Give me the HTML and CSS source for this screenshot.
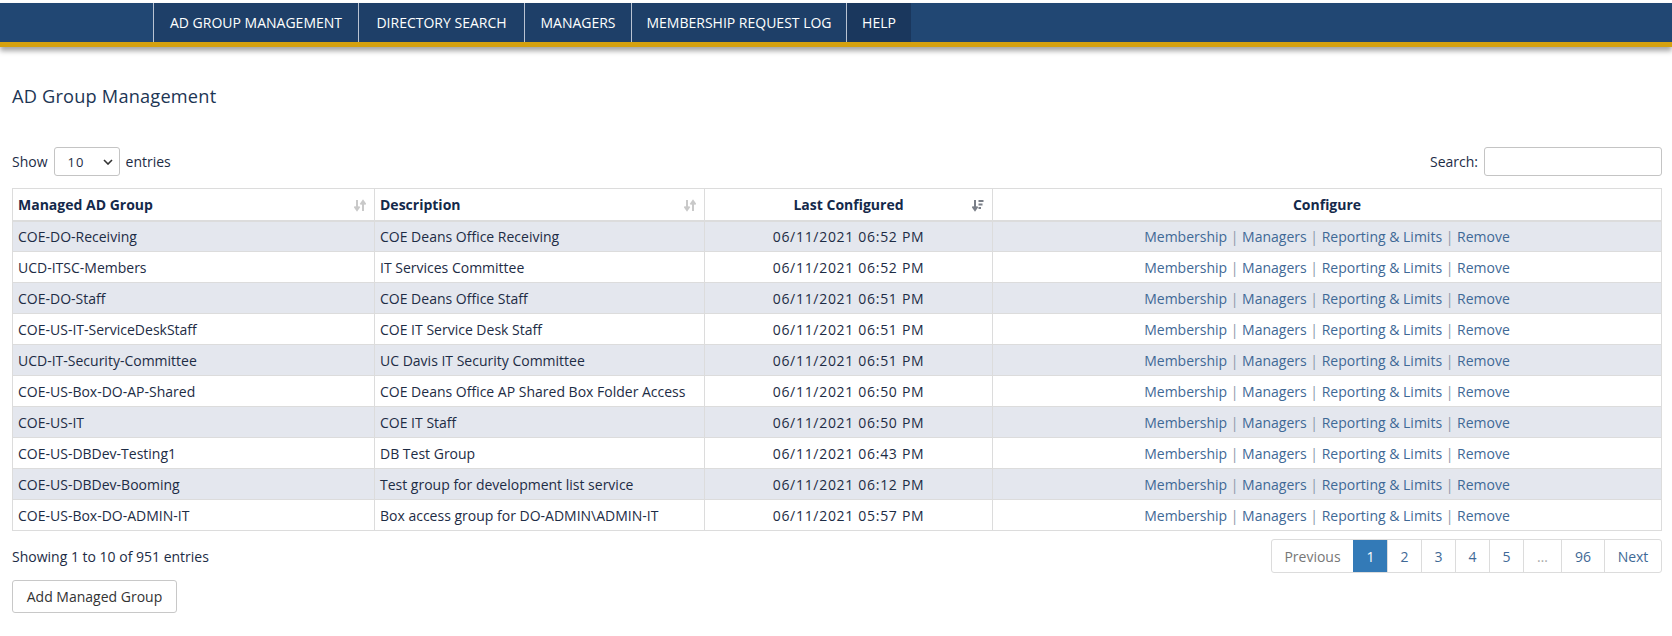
FILE: index.html
```html
<!DOCTYPE html>
<html lang="en">
<head>
<meta charset="utf-8">
<title>AD Group Management</title>
<link rel="stylesheet" href="styles.css">
</head>
<body>
<header class="topbar">
  <nav class="nav">
    <a class="nav-item w1">AD GROUP MANAGEMENT</a>
    <a class="nav-item w2">DIRECTORY SEARCH</a>
    <a class="nav-item w3">MANAGERS</a>
    <a class="nav-item w4">MEMBERSHIP REQUEST LOG</a>
    <a class="nav-item w5 nav-help">HELP</a>
  </nav>
</header>
<main class="page">
  <h1 class="title">AD Group Management</h1>
  <div class="controls">
    <label class="length">Show
      <span class="select"><span class="select-val">10</span>
        <svg class="chev" width="10" height="6" viewBox="0 0 10 6"><path d="M1 1l4 4 4-4" fill="none" stroke="#333" stroke-width="1.6"/></svg>
      </span>
      entries</label>
    <label class="search">Search: <span class="search-input"></span></label>
  </div>
  <table class="grid">
    <colgroup>
      <col class="c1"><col class="c2"><col class="c3"><col class="c4">
    </colgroup>
    <thead>
      <tr>
        <th class="sortable">Managed AD Group
          <svg class="sort" width="12" height="13" viewBox="0 0 12 13"><path d="M3 1v9M0.5 7.5L3 11l2.5-3.5" fill="none" stroke="#c9c9c9" stroke-width="2"/><path d="M9 12V3M6.5 5.5L9 2l2.5 3.5" fill="none" stroke="#c9c9c9" stroke-width="2"/></svg>
        </th>
        <th class="sortable">Description
          <svg class="sort" width="12" height="13" viewBox="0 0 12 13"><path d="M3 1v9M0.5 7.5L3 11l2.5-3.5" fill="none" stroke="#c9c9c9" stroke-width="2"/><path d="M9 12V3M6.5 5.5L9 2l2.5 3.5" fill="none" stroke="#c9c9c9" stroke-width="2"/></svg>
        </th>
        <th class="sortable center">Last Configured
          <svg class="sort" width="12" height="13" viewBox="0 0 12 13"><path d="M3 1v9M0.5 7.5L3 11l2.5-3.5" fill="none" stroke="#7a7f88" stroke-width="2"/><path d="M6.5 2h5M6.5 5.5h4M6.5 9h2.5" fill="none" stroke="#7a7f88" stroke-width="1.8"/></svg>
        </th>
        <th class="center">Configure</th>
      </tr>
    </thead>
    <tbody>
      <tr><td>COE-DO-Receiving</td><td>COE Deans Office Receiving</td><td class="center date">06/11/2021 06:52 PM</td><td class="center links"><a>Membership</a> | <a>Managers</a> | <a>Reporting &amp; Limits</a> | <a>Remove</a></td></tr>
      <tr><td>UCD-ITSC-Members</td><td>IT Services Committee</td><td class="center date">06/11/2021 06:52 PM</td><td class="center links"><a>Membership</a> | <a>Managers</a> | <a>Reporting &amp; Limits</a> | <a>Remove</a></td></tr>
      <tr><td>COE-DO-Staff</td><td>COE Deans Office Staff</td><td class="center date">06/11/2021 06:51 PM</td><td class="center links"><a>Membership</a> | <a>Managers</a> | <a>Reporting &amp; Limits</a> | <a>Remove</a></td></tr>
      <tr><td>COE-US-IT-ServiceDeskStaff</td><td>COE IT Service Desk Staff</td><td class="center date">06/11/2021 06:51 PM</td><td class="center links"><a>Membership</a> | <a>Managers</a> | <a>Reporting &amp; Limits</a> | <a>Remove</a></td></tr>
      <tr><td>UCD-IT-Security-Committee</td><td>UC Davis IT Security Committee</td><td class="center date">06/11/2021 06:51 PM</td><td class="center links"><a>Membership</a> | <a>Managers</a> | <a>Reporting &amp; Limits</a> | <a>Remove</a></td></tr>
      <tr><td>COE-US-Box-DO-AP-Shared</td><td>COE Deans Office AP Shared Box Folder Access</td><td class="center date">06/11/2021 06:50 PM</td><td class="center links"><a>Membership</a> | <a>Managers</a> | <a>Reporting &amp; Limits</a> | <a>Remove</a></td></tr>
      <tr><td>COE-US-IT</td><td>COE IT Staff</td><td class="center date">06/11/2021 06:50 PM</td><td class="center links"><a>Membership</a> | <a>Managers</a> | <a>Reporting &amp; Limits</a> | <a>Remove</a></td></tr>
      <tr><td>COE-US-DBDev-Testing1</td><td>DB Test Group</td><td class="center date">06/11/2021 06:43 PM</td><td class="center links"><a>Membership</a> | <a>Managers</a> | <a>Reporting &amp; Limits</a> | <a>Remove</a></td></tr>
      <tr><td>COE-US-DBDev-Booming</td><td>Test group for development list service</td><td class="center date">06/11/2021 06:12 PM</td><td class="center links"><a>Membership</a> | <a>Managers</a> | <a>Reporting &amp; Limits</a> | <a>Remove</a></td></tr>
      <tr><td>COE-US-Box-DO-ADMIN-IT</td><td>Box access group for DO-ADMIN\ADMIN-IT</td><td class="center date">06/11/2021 05:57 PM</td><td class="center links"><a>Membership</a> | <a>Managers</a> | <a>Reporting &amp; Limits</a> | <a>Remove</a></td></tr>
    </tbody>
  </table>
  <div class="footer-row">
    <div class="info">Showing 1 to 10 of 951 entries</div>
    <ul class="pager">
      <li class="pg prev disabled">Previous</li>
      <li class="pg active">1</li>
      <li class="pg">2</li>
      <li class="pg">3</li>
      <li class="pg">4</li>
      <li class="pg">5</li>
      <li class="pg dots">…</li>
      <li class="pg wide">96</li>
      <li class="pg next">Next</li>
    </ul>
  </div>
  <button class="btn">Add Managed Group</button>
</main>
</body>
</html>
```

FILE: styles.css
```css
* { box-sizing: border-box; }
html, body { margin: 0; padding: 0; background: #fff; }
body {
  font-family: "Open Sans", "DejaVu Sans", sans-serif;
  font-size: 14px;
  color: #1d2c45;
  padding-top: 3px;
}
.topbar {
  height: 44px;
  background: #214773;
  border-bottom: 5px solid #d5a10f;
  box-shadow: 0 4px 5px rgba(0,0,0,0.35);
}
.nav {
  display: flex;
  height: 39px;
  padding-left: 153px;
}
.nav-item {
  display: flex;
  align-items: center;
  justify-content: center;
  background: #1e3f68;
  border-left: 1px solid #b9c3d2;
  color: #fff;
  font-family: "Open Sans", sans-serif;
  font-size: 14px;
  letter-spacing: 0;
  white-space: nowrap;
}
.w1 { width: 205px; }
.w2 { width: 166px; }
.w3 { width: 107px; }
.w4 { width: 215px; }
.w5 { width: 65px; }
.nav-help { background: #1a375d; }
.page { padding: 0 10px 0 12px; }
.title {
  margin: 37px 0 0 0;
  font-size: 18.2px;
  font-weight: 400;
  color: #1c3554;
  line-height: 25px;
  letter-spacing: 0.2px;
}
.controls {
  display: flex;
  justify-content: space-between;
  align-items: center;
  margin-top: 38px;
  height: 29px;
}
.length { display: flex; align-items: center; gap: 6px; }
.select {
  display: inline-flex;
  align-items: center;
  justify-content: space-between;
  width: 66px;
  height: 29px;
  border: 1px solid #c4c4c4;
  border-radius: 3px;
  padding: 0 6px 0 13px;
  font-size: 13px;
  letter-spacing: 1px;
}
.search { display: flex; align-items: center; gap: 6px; }
.search-input {
  display: inline-block;
  width: 178px;
  height: 29px;
  border: 1px solid #c4c4c4;
  border-radius: 3px;
}
.grid {
  margin-top: 12px;
  width: 1649px;
  border-collapse: collapse;
  table-layout: fixed;
  border: 1px solid #dcdcdc;
}
.c1 { width: 362px; }
.c2 { width: 330px; }
.c3 { width: 288px; }
.c4 { width: 669px; }
th, td {
  border: 1px solid #dcdcdc;
  padding: 0 5px;
  text-align: left;
  white-space: nowrap;
  overflow: hidden;
}
th {
  height: 32px;
  font-weight: 700;
  border-bottom: 2px solid #dcdcdc;
  color: #14294a;
  position: relative;
}
td { height: 31px; }
.center { text-align: center; }
.sort { position: absolute; right: 8px; top: 10px; }
tbody tr:nth-child(odd) td { background: #e4e7ee; }
.date { letter-spacing: 0.7px; }
.links { color: #8b97a8; }
.links a { color: #3f6996; }
.footer-row {
  display: flex;
  justify-content: space-between;
  align-items: center;
  margin-top: 8px;
  height: 34px;
}
.pager {
  display: flex;
  list-style: none;
  margin: 0;
  padding: 0;
  border: 1px solid #dcdcdc;
  border-radius: 3px;
  height: 34px;
}
.pg {
  display: flex;
  align-items: center;
  justify-content: center;
  width: 34px;
  border-left: 1px solid #dcdcdc;
  color: #3f6996;
}
.pg:first-child { border-left: none; }
.pg.prev { width: 81px; }
.pg.disabled { color: #777; }
.pg.active { background: #337ab7; color: #fff; border-color: #337ab7; }
.pg.dots { color: #aaa; width: 38px; }
.pg.wide { width: 43px; }
.pg.next { width: 57px; }
.btn {
  margin-top: 7px;
  font-family: inherit;
  font-size: 14px;
  color: #333;
  background: #fff;
  border: 1px solid #c8c8c8;
  border-radius: 3px;
  height: 33px;
  width: 165px;
}
```
